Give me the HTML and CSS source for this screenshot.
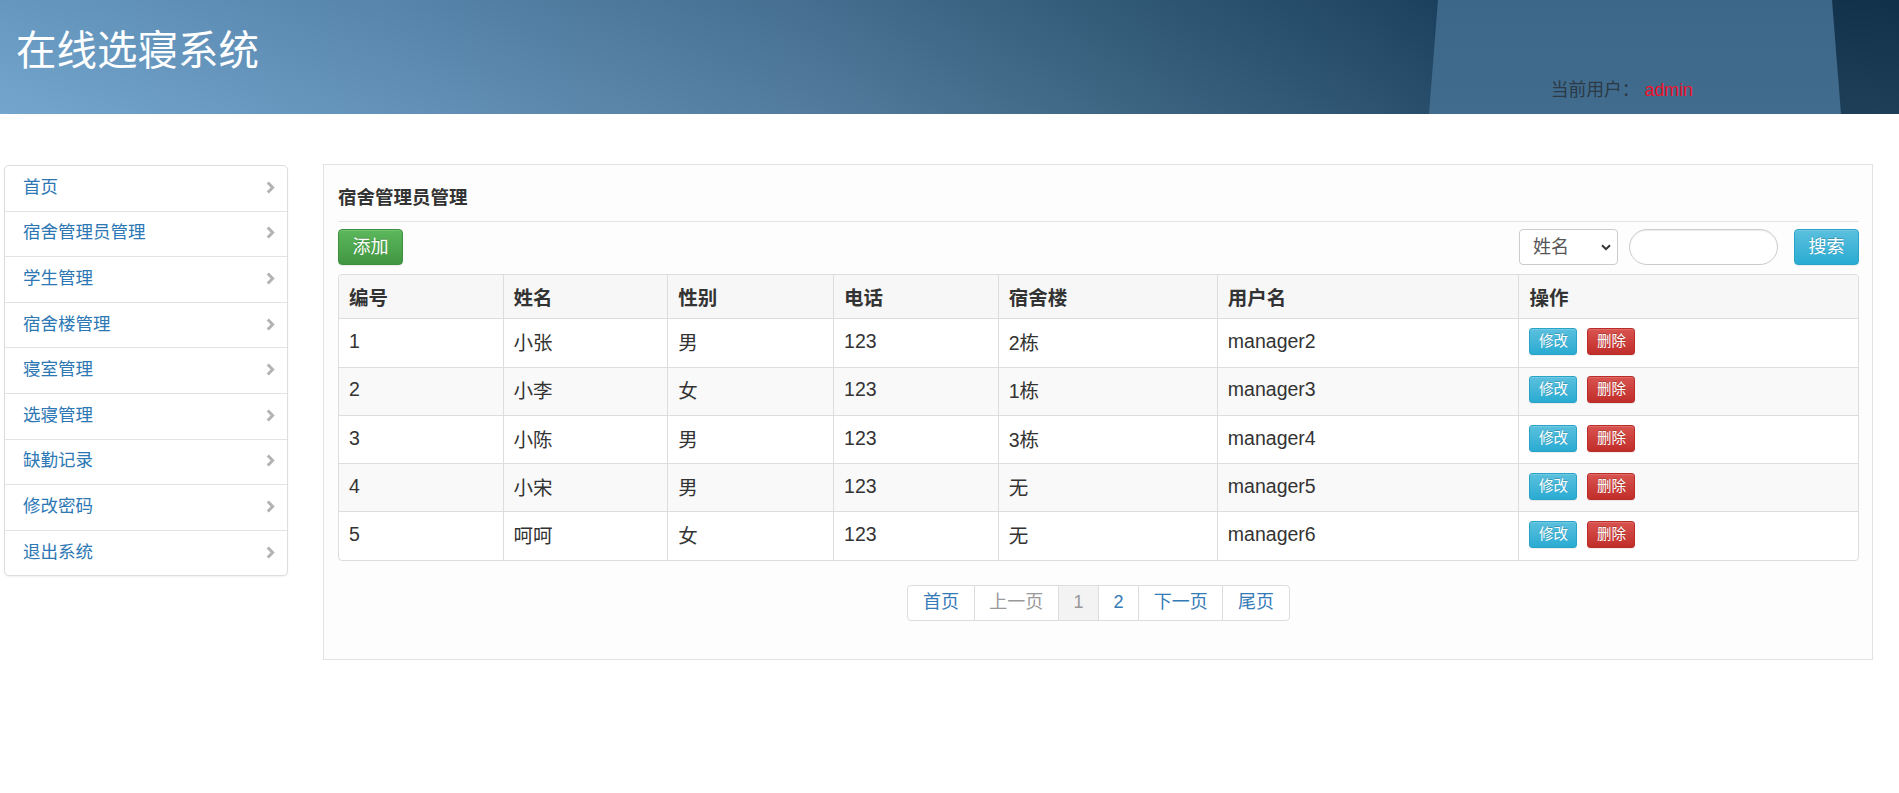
FILE: index.html
```html
<!DOCTYPE html>
<html lang="zh-CN">
<head>
<meta charset="utf-8">
<title>在线选寝系统</title>
<link rel="stylesheet" href="styles.css">
</head>
<body>
<header class="topbar">
  <h1 class="brand">在线选寝系统</h1>
  <div class="current-user">当前用户：<span class="user-name">admin</span></div>
</header>

<div class="layout">
  <nav class="side-menu">
    <a class="menu-item" href="#"><span>首页</span><svg class="chev" viewBox="0 0 9 13"><path d="M1.8 1.5 L6.6 6.5 L1.8 11.5"/></svg></a>
    <a class="menu-item" href="#"><span>宿舍管理员管理</span><svg class="chev" viewBox="0 0 9 13"><path d="M1.8 1.5 L6.6 6.5 L1.8 11.5"/></svg></a>
    <a class="menu-item" href="#"><span>学生管理</span><svg class="chev" viewBox="0 0 9 13"><path d="M1.8 1.5 L6.6 6.5 L1.8 11.5"/></svg></a>
    <a class="menu-item" href="#"><span>宿舍楼管理</span><svg class="chev" viewBox="0 0 9 13"><path d="M1.8 1.5 L6.6 6.5 L1.8 11.5"/></svg></a>
    <a class="menu-item" href="#"><span>寝室管理</span><svg class="chev" viewBox="0 0 9 13"><path d="M1.8 1.5 L6.6 6.5 L1.8 11.5"/></svg></a>
    <a class="menu-item" href="#"><span>选寝管理</span><svg class="chev" viewBox="0 0 9 13"><path d="M1.8 1.5 L6.6 6.5 L1.8 11.5"/></svg></a>
    <a class="menu-item" href="#"><span>缺勤记录</span><svg class="chev" viewBox="0 0 9 13"><path d="M1.8 1.5 L6.6 6.5 L1.8 11.5"/></svg></a>
    <a class="menu-item" href="#"><span>修改密码</span><svg class="chev" viewBox="0 0 9 13"><path d="M1.8 1.5 L6.6 6.5 L1.8 11.5"/></svg></a>
    <a class="menu-item" href="#"><span>退出系统</span><svg class="chev" viewBox="0 0 9 13"><path d="M1.8 1.5 L6.6 6.5 L1.8 11.5"/></svg></a>
  </nav>

  <main class="panel">
    <h2 class="panel-title">宿舍管理员管理</h2>
    <div class="toolbar">
      <button class="btn btn-success" type="button">添加</button>
      <form class="search">
        <span class="select-wrap">
          <select class="field-select">
            <option>姓名</option>
            <option>用户名</option>
          </select>
          <svg class="select-arrow" viewBox="0 0 10 7"><path d="M1 1.2 L5 5.2 L9 1.2"/></svg>
        </span>
        <input class="search-input" type="text">
        <button class="btn btn-info" type="button">搜索</button>
      </form>
    </div>

    <table class="grid">
      <colgroup>
        <col class="c-id"><col class="c-name"><col class="c-sex"><col class="c-tel"><col class="c-bld"><col class="c-user"><col>
      </colgroup>
      <thead>
        <tr><th>编号</th><th>姓名</th><th>性别</th><th>电话</th><th>宿舍楼</th><th>用户名</th><th>操作</th></tr>
      </thead>
      <tbody>
        <tr><td>1</td><td>小张</td><td>男</td><td>123</td><td>2栋</td><td>manager2</td><td><button class="btn-xs info" type="button">修改</button><button class="btn-xs danger" type="button">删除</button></td></tr>
        <tr><td>2</td><td>小李</td><td>女</td><td>123</td><td>1栋</td><td>manager3</td><td><button class="btn-xs info" type="button">修改</button><button class="btn-xs danger" type="button">删除</button></td></tr>
        <tr><td>3</td><td>小陈</td><td>男</td><td>123</td><td>3栋</td><td>manager4</td><td><button class="btn-xs info" type="button">修改</button><button class="btn-xs danger" type="button">删除</button></td></tr>
        <tr><td>4</td><td>小宋</td><td>男</td><td>123</td><td>无</td><td>manager5</td><td><button class="btn-xs info" type="button">修改</button><button class="btn-xs danger" type="button">删除</button></td></tr>
        <tr><td>5</td><td>呵呵</td><td>女</td><td>123</td><td>无</td><td>manager6</td><td><button class="btn-xs info" type="button">修改</button><button class="btn-xs danger" type="button">删除</button></td></tr>
      </tbody>
    </table>

    <ul class="pager">
      <li><a href="#">首页</a></li>
      <li class="disabled"><span>上一页</span></li>
      <li class="active"><span>1</span></li>
      <li><a href="#">2</a></li>
      <li><a href="#">下一页</a></li>
      <li><a href="#">尾页</a></li>
    </ul>
  </main>
</div>
</body>
</html>
```
FILE: styles.css
```css
* { box-sizing: border-box; }

body {
  margin: 0;
  background: #fff;
  color: #333;
  font-family: "Liberation Sans", "Noto Sans CJK SC", sans-serif;
}

/* ---------- top bar ---------- */
.topbar {
  position: relative;
  height: 114px;
  display: flex;
  justify-content: space-between;
  align-items: flex-start;
  background:
    linear-gradient(180deg, rgba(0,0,0,0.06) 0%, rgba(255,255,255,0.05) 100%),
    linear-gradient(90deg, #6ca1cb 0px, #5c8db6 380px, #4a7599 800px, #35607f 1100px, #224a69 1380px, #1d4463 1436px, #163a57 1500px, #12344f 1899px);
  overflow: hidden;
}
/* lighter slanted panel behind the user info */
.topbar::before {
  content: "";
  position: absolute;
  top: 0;
  left: 1429px;
  width: 412px;
  height: 100%;
  background: linear-gradient(180deg, #3d6788 0%, #416c8d 100%);
  clip-path: polygon(9px 0, 403px 0, 412px 100%, 0 100%);
}
.brand {
  position: relative;
  margin: 0;
  padding: 27px 0 0 16px;
  font-size: 40.5px;
  line-height: 48px;
  font-weight: normal;
  color: #fff;
}
.current-user {
  position: relative;
  align-self: flex-end;
  margin-right: 206px;
  padding-bottom: 12px;
  font-size: 17.8px;
  line-height: 24px;
  color: #2b3a46;
}
.user-name {
  margin-left: 5px;
  color: #f0102a;
}

/* ---------- page body ---------- */
.layout {
  display: flex;
  align-items: flex-start;
  gap: 35px;
  padding: 50px 26px 0 4px;
}

.side-menu {
  flex: 0 0 284px;
  margin-top: 1px;
  display: flex;
  flex-direction: column;
  border: 1px solid #ddd;
  border-radius: 5px;
  background: #fff;
  box-shadow: 0 1px 2px rgba(0,0,0,0.06);
}
.menu-item {
  display: flex;
  align-items: center;
  justify-content: space-between;
  height: 45.6px;
  padding: 0 12px 6px 18px;
  border-top: 1px solid #e3e3e3;
  font-size: 17.5px;
  color: #2d78b4;
  text-decoration: none;
}
.menu-item:first-child { border-top: 0; height: 44.6px; }
.chev {
  width: 9px;
  height: 13px;
  margin-top: 4px;
  fill: none;
  stroke: #b3b3b3;
  stroke-width: 3;
}

.panel {
  flex: 0 0 1550px;
  padding: 0 13px 38px 14px;
  border: 1px solid #e3e3e3;
  background: #fdfdfd;
}
.panel-title {
  margin: 0;
  padding: 20px 0 11px;
  border-bottom: 1px solid #e5e5e5;
  font-size: 18.5px;
  line-height: 25px;
  font-weight: bold;
  color: #333;
}

.toolbar {
  display: flex;
  justify-content: space-between;
  align-items: center;
  margin: 7px 0 9px;
}
.search {
  display: flex;
  align-items: center;
  margin: 0;
}

.btn {
  height: 36px;
  width: 65px;
  padding: 0;
  border-radius: 4px;
  font-family: inherit;
  font-size: 18px;
  line-height: 34px;
  color: #fff;
  text-shadow: 0 -1px 0 rgba(0,0,0,0.2);
  box-shadow: inset 0 1px 0 rgba(255,255,255,0.15), 0 1px 1px rgba(0,0,0,0.075);
}
.btn-success {
  border: 1px solid #3e8f3e;
  background: linear-gradient(180deg, #5cb85c 0%, #419641 100%);
}
.btn-info {
  margin-left: 16px;
  border: 1px solid #28a4c9;
  background: linear-gradient(180deg, #5bc0de 0%, #2aabd2 100%);
}

.select-wrap {
  position: relative;
  display: inline-block;
}
.field-select {
  appearance: none;
  -webkit-appearance: none;
  width: 99px;
  height: 36px;
  padding: 0 0 0 13px;
  border: 1px solid #ccc;
  border-radius: 4px;
  background: #fff;
  font-family: inherit;
  font-size: 18px;
  color: #555;
}
.select-arrow {
  position: absolute;
  right: 7px;
  top: 15px;
  width: 10px;
  height: 7px;
  fill: none;
  stroke: #333;
  stroke-width: 2;
  pointer-events: none;
}
.search-input {
  width: 149px;
  height: 36px;
  margin-left: 11px;
  border: 1px solid #ccc;
  border-radius: 18px;
  background: #fff;
  box-shadow: inset 0 1px 1px rgba(0,0,0,0.075);
}

/* ---------- data table ---------- */
.grid {
  width: 100%;
  table-layout: fixed;
  border-collapse: separate;
  border-spacing: 0;
  border: 1px solid #ddd;
  border-radius: 4px;
  background: #fff;
  font-size: 19.5px;
}
.c-id { width: 164.5px; }
.c-name { width: 164.7px; }
.c-sex { width: 165.9px; }
.c-tel { width: 164.7px; }
.c-bld { width: 219.1px; }
.c-user { width: 301.6px; }

.grid th,
.grid td {
  padding: 0 10px 3px;
  text-align: left;
  border-right: 1px solid #ddd;
  white-space: nowrap;
}
.grid th:last-child,
.grid td:last-child { border-right: 0; }
.grid th {
  height: 43.3px;
  padding-bottom: 1px;
  font-weight: bold;
  background: #f7f7f7;
  color: #333;
}
.grid td {
  height: 48.3px;
  border-top: 1px solid #ddd;
  color: #333;
}
.grid tbody tr:nth-child(even) td { background: #f9f9f9; }
.grid thead th:first-child { border-top-left-radius: 4px; }
.grid thead th:last-child { border-top-right-radius: 4px; }

.btn-xs {
  height: 27px;
  width: 48px;
  padding: 0;
  margin-right: 10px;
  border-radius: 3px;
  font-family: inherit;
  font-size: 14.5px;
  line-height: 25px;
  color: #fff;
  text-shadow: 0 -1px 0 rgba(0,0,0,0.2);
  box-shadow: inset 0 1px 0 rgba(255,255,255,0.15), 0 1px 1px rgba(0,0,0,0.075);
  vertical-align: middle;
}
.btn-xs.info {
  border: 1px solid #28a4c9;
  background: linear-gradient(180deg, #5bc0de 0%, #2aabd2 100%);
}
.btn-xs.danger {
  border: 1px solid #b92c28;
  background: linear-gradient(180deg, #d9534f 0%, #c12e2a 100%);
}

/* ---------- pager ---------- */
.pager {
  display: flex;
  justify-content: center;
  margin: 24px 0 0;
  padding: 0;
  list-style: none;
  font-size: 18px;
}
.pager li a,
.pager li span {
  display: block;
  height: 36px;
  padding: 0 14.6px 1px;
  margin-left: -1px;
  border: 1px solid #ddd;
  background: #fff;
  line-height: 33px;
  color: #337ab7;
  text-decoration: none;
}
.pager li:first-child a { margin-left: 0; border-radius: 4px 0 0 4px; }
.pager li:last-child a { border-radius: 0 4px 4px 0; }
.pager li.disabled span { color: #999; }
.pager li.active span { background: #f3f3f3; color: #999; }
```
